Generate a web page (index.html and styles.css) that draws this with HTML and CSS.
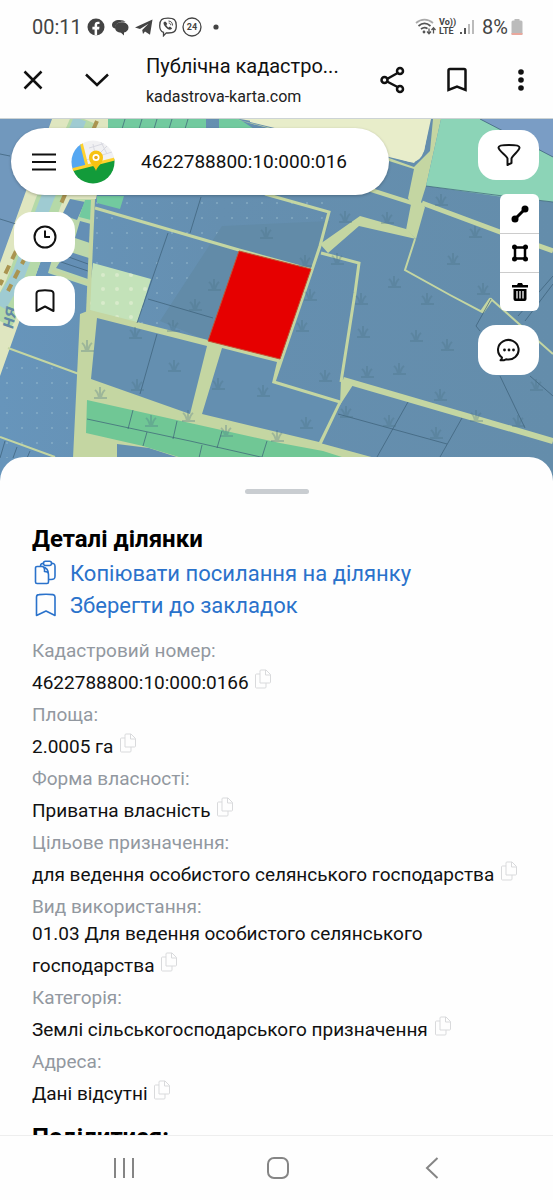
FILE: index.html
```html
<!DOCTYPE html>
<html lang="uk">
<head>
  <meta charset="UTF-8" />
  <meta name="viewport" content="width=device-width, initial-scale=1" />
  <title>Публічна кадастрова карта</title>
  <link rel="stylesheet" href="styles.css">
</head>
<body>

<div class="status-bar">
  <span class="clock">00:11</span>
  <svg class="status-icon" viewBox="0 0 20 20"><circle cx="10" cy="10" r="8.5" fill="#444"/><path d="M8.6 18.5v-6H6.4V9.8h2.2V8.2c0-2.4 1.3-3.5 3.3-3.5.7 0 1.3.1 1.6.1v2.3h-1.1c-1 0-1.3.5-1.3 1.3v1.4h2.4l-.4 2.7h-2v6z" fill="#fff"/></svg>
  <svg class="status-icon" viewBox="0 0 20 20"><path d="M2 8c0-3 3-5 7.500-5 3 0 5 .8 6 2-6-.8-10 1-10.500 6.500C3 11 2 10 2 8z" fill="#444"/><path d="M5 10.500c0-3.300 3-5.200 6.800-5.200s6.700 2 6.700 5.200c0 2.800-2 4.500-4.500 5V18.500l-3-2.800c-3.500-.2-6-2.200-6-5.200z" fill="#444"/></svg>
  <svg class="status-icon" viewBox="0 0 20 20"><path d="M1 10.500 18.500 2.600 16 17.700l-5-3.200-2 2.500-.8-4 6.300-6.200-8.500 5.200z" fill="#444"/></svg>
  <svg class="status-icon" viewBox="0 0 20 20" fill="none" stroke="#444" stroke-width="1.300"><path d="M10 1.200c6.200 0 8.300 1.800 8.300 7.500S16.200 16 10 16c-.6 0-1.200 0-1.700-.1L5.500 18.800v-3.500C2.700 14.300 1.700 12.500 1.700 8.700c0-5.700 2.100-7.500 8.300-7.500z"/><path d="M6.200 4.800c-1.500 1.200-.5 3.300 1.300 5.300s4.300 3.500 5.800 2.200l.8-1-2.200-1.700-1.200.9c-1-.5-2-1.500-2.400-2.600l1-.9-1.500-2.300z" fill="#444" stroke="none"/><path d="M10.500 4c2.600.2 4 1.700 4 4.500M10.700 6c1.200.1 2 .9 2 2.200" stroke-width="1"/></svg>
  <svg class="status-icon" viewBox="0 0 20 20"><circle cx="10" cy="10" r="9" fill="none" stroke="#444" stroke-width="1.300"/><text x="10" y="13.300" text-anchor="middle" class="badge-24">24</text></svg>
  <svg class="status-icon" viewBox="0 0 20 20"><circle cx="10" cy="10" r="2.600" fill="#444"/></svg>

  <div class="status-right">
    <svg width="21" height="18" viewBox="0 0 21 18" fill="none" stroke="#555" stroke-width="1.700"><path d="M1 5C6 .6 13 .6 18 5" stroke="#aaa"/><path d="M3.500 8c4-3.400 8-3.400 12 0M6 11c2.500-2 4.500-2 6.500-.3"/><circle cx="9" cy="14" r="1.400" fill="#555" stroke="none"/><path d="M14 10.500v5m-2-2 2 2.200 2-2.200M18.500 15.500v-5.500m-2 2 2-2.200 2 2.200" stroke-width="1.300"/></svg>
    <span class="volte"><span>Vo))</span><span>LTE</span></span>
    <svg width="16" height="18" viewBox="0 0 16 18"><path d="M1 14h2v2H1zM5 10h2v6H5z" fill="#555"/><path d="M9 6h2v10H9zM13 2h2v14h-2z" fill="#bbb"/></svg>
    <span class="charge">8%</span>
    <svg width="12" height="16" viewBox="0 0 12 16"><path d="M3.500 0h5v1.500H10a1.500 1.500 0 0 1 1.500 1.500v12a1 1 0 0 1-1 1h-9a1 1 0 0 1-1-1V3A1.500 1.500 0 0 1 2 1.500h1.500z" fill="#bbb"/><path d="M.5 14h11v1a1 1 0 0 1-1 1h-9a1 1 0 0 1-1-1z" fill="#eaa79c"/></svg>
  </div>
</div>

<header class="browser-bar">
  <button aria-label="Закрити"><svg width="24" height="24" viewBox="0 0 24 24"><path d="m3.500 3.500 17 17m0-17-17 17"/></svg></button>
  <button aria-label="Згорнути"><svg width="28" height="24" viewBox="0 0 28 24"><path d="m3 6.500 11 10.500L25 6.500"/></svg></button>
  <div class="page-info">
    <div class="page-title">Публічна кадастро...</div>
    <div class="page-url">kadastrova-karta.com</div>
  </div>
  <button aria-label="Поділитися"><svg width="26" height="28" viewBox="0 0 26 28"><path d="m7 13 11.500-6.500M7 15.500 18.500 21.500"/><circle cx="4.500" cy="14" r="3"/><circle cx="20" cy="5" r="3"/><circle cx="20" cy="23" r="3"/></svg></button>
  <button aria-label="Закладка"><svg width="20" height="26" viewBox="0 0 20 26"><path d="M1.500 3.500a1.500 1.500 0 0 1 1.500-1.500h14a1.500 1.500 0 0 1 1.500 1.500V23L10 19.500 1.500 23z"/></svg></button>
  <button aria-label="Меню"><svg width="8" height="24" viewBox="0 0 8 24"><g fill="#111" stroke="none"><circle cx="4" cy="4" r="2.800"/><circle cx="4" cy="12" r="2.800"/><circle cx="4" cy="20" r="2.800"/></g></svg></button>
</header>

<main class="map">
  <svg class="map-canvas" viewBox="0 118 553 364" preserveAspectRatio="xMidYMin slice">
    <defs>
      <pattern id="dots" width="15" height="15" patternUnits="userSpaceOnUse"><circle cx="7" cy="7" r="1" fill="#a9cad6" opacity=".45"/></pattern>
      <pattern id="light-dots" width="14" height="14" patternUnits="userSpaceOnUse"><circle cx="5" cy="8" r="2" fill="#e2f0d4" opacity=".7"/></pattern>
      <g id="plant" fill="none" stroke="#4a7286" stroke-width="2" opacity=".32"><path d="M0-6V5M-1 5Q-2-1-5-3M1 5Q2-1 5-3M-6 5H7"/></g>
      <linearGradient id="land"><stop offset="0" stop-color="#6795bb"/><stop offset=".4" stop-color="#658fb0"/><stop offset="1" stop-color="#648dab"/></linearGradient>
    </defs>
    <rect y="118" width="553" height="370" fill="url(#land)"/>
    <path d="M95 195h230l-5 50-60 5-100 80-70-20zM0 350l80 25-5 82H0z" fill="url(#dots)"/>
    <path d="M222 225 330 220 312 268 239 250 208 340 160 320z" fill="#628ba8"/>

    <!-- river and the shore -->
    <path d="M0 118h52L0 262z" fill="#7198bd"/>
    <path d="M52 118h60l-16 80-24 2-32 62L0 375V262z" fill="#dfe6c0"/>
    <path d="M84 118 48 202 18 285 0 320" stroke="#b5d9a8" stroke-width="26" fill="none"/>
    <path d="M80 118 45 203 18 275 0 305" stroke="#9fcbd2" stroke-width="13" fill="none"/>
    <path d="M97 120 60 205 M26 255 8 290 M16 250 0 284" stroke="#aa9450" stroke-width="4" stroke-dasharray="9 7" fill="none"/>
    <text class="river-name" transform="translate(13 328) rotate(-80)">ня</text>
    <path d="M0 153l10 2M0 218l16 5" class="border"/>

    <!-- top strip -->
    <path d="M108 118h98v12h-98zM219 118h20l18 12h-38z" fill="#72ca9f"/>
    <path d="M125 118l-3 10M142 118l-3 10M157 118l-3 10M172 118l-3 10M188 118l-3 10" class="border"/>
    <path d="M240 118h191l-7 32-10 12-25-6-90-28z" fill="#e8edca"/>
    <path d="M235 118 389 157 414 166 430 150 433 118h8l-15 67-5 16 4 5-9 32-10-9 5-26-3-6 6-29-25-8-140-38z" fill="#c4d6a2"/>
    <path d="M250 118h180l-6 32q-4 12-14 11l-28-8-132-32z" fill="#e8edca"/>
    <path d="M441 118h39l73 38v45l-50-5-77-11z" fill="#8cd4b7"/>
    <path d="M480 118h73v38z" fill="#7a9dc5"/>
    <path d="M480 118l73 38M426 185l77 10 50 6" class="border"/>

    <!-- small parcels left -->
    <path d="M70 198h23l-3 88-42-14z" fill="#bdd8ab"/>
    <path d="M70 198 85 201 77 219 62 214zM80 220l11 3-1 19-15-5zM67 250l22 7-1 21-32-11z" fill="#648fb5"/>
    <path d="M97 195h27l-4 13-23-6zM85 199h8l-2 20-12-3z" fill="#72ca9f"/>
    <path d="M66 255l22 8M61 261l27 9" class="border"/>
    <path d="M93 262 151 278 137 322 87 309z" fill="#c3e2b9"/>
    <path d="M93 262 151 278 137 322 87 309z" fill="url(#light-dots)"/>

    <!-- roads -->
    <path d="M80 313 90 309 208 339 281 357 275 382 340 402 320 442 375 457 73 457z" fill="#c4d6a2"/>
    <g class="road">
      <path d="M93 198 88 312" stroke-width="4"/>
      <path d="M95 207 239 249 312 269" stroke-width="3"/>
      <path d="M265 193 329 211 320 245 312 269 274 381 340 401 320 443" stroke-width="3"/>
      <path d="M321 252 359 262 355 292 341 381" stroke-width="3"/>
      <path d="M343 379 553 440" stroke-width="6"/>
      <path d="M368 188 412 202" stroke-width="4"/>
      <path d="M422 202 500 231 553 250" stroke-width="5"/>
      <path d="M415 238 405 269 450 294 482 311 491 298 553 353" stroke-width="2"/>
      <path d="M482 311 491 298" stroke-width="4"/>
      <path d="M8 347 79 373M0 436 55 456" stroke-width="2"/>
      <path d="M52 270 88 282" stroke-width="3"/>
    </g>
    <path d="M320 243 360 215 406 228 416 238 359 225 328 252zM341 378l12 6-13 20z" fill="#c4d6a2"/>

    <path d="M97 317 207 345 190 413 91 378zM222 347 277 361 272 382 338 402 319 441 202 413zM117 443l32 4 34 11h-66z" fill="#648fb0"/>
    <path d="M87 399 280 442 323 450 345 457H182l-39-12-57-13z" fill="#70c795"/>
    <path d="M157 333 140 393M87 418 190 440 265 457M133 409 128 428M177 420 173 438M222 430 217 447M267 440 262 456M147 431 143 445M202 444 199 457" class="border"/>
    <path d="M201 196 190 232M168 232 137 322M148 298 213 317M500 375 525 427M338 413 447 443M408 401 377 456M462 417 440 456M491 298 476 325 480 330M553 275 518 315M553 283 525 320M530 375 553 395M5 440 0 457M17 446 13 457M30 450 27 457" class="border"/>

    <path d="M239 250 311 268 280 358 208 340z" fill="#e60000" stroke="#c44f31"/>

    <use href="#plant" x="87" y="345"/><use href="#plant" x="100" y="392"/><use href="#plant" x="135" y="332"/>
    <use href="#plant" x="174" y="365"/><use href="#plant" x="137" y="384"/><use href="#plant" x="195" y="304"/>
    <use href="#plant" x="173" y="325"/><use href="#plant" x="218" y="383"/><use href="#plant" x="263" y="390"/>
    <use href="#plant" x="188" y="415"/><use href="#plant" x="151" y="420"/><use href="#plant" x="226" y="430"/>
    <use href="#plant" x="214" y="284"/><use href="#plant" x="266" y="232"/><use href="#plant" x="305" y="260"/>
    <use href="#plant" x="345" y="216"/><use href="#plant" x="387" y="217"/><use href="#plant" x="441" y="199"/>
    <use href="#plant" x="475" y="231"/><use href="#plant" x="453" y="258"/><use href="#plant" x="394" y="281"/>
    <use href="#plant" x="337" y="258"/><use href="#plant" x="310" y="294"/><use href="#plant" x="361" y="298"/>
    <use href="#plant" x="427" y="298"/><use href="#plant" x="302" y="325"/><use href="#plant" x="363" y="331"/>
    <use href="#plant" x="416" y="335"/><use href="#plant" x="447" y="344"/><use href="#plant" x="367" y="371"/>
    <use href="#plant" x="399" y="368"/><use href="#plant" x="325" y="375"/><use href="#plant" x="440" y="394"/>
    <use href="#plant" x="306" y="422"/><use href="#plant" x="346" y="411"/><use href="#plant" x="389" y="420"/>
    <use href="#plant" x="436" y="432"/><use href="#plant" x="476" y="415"/><use href="#plant" x="518" y="420"/>
    <use href="#plant" x="536" y="384"/><use href="#plant" x="483" y="288"/><use href="#plant" x="277" y="435"/>
  </svg>

  <div class="map-controls">
    <div class="left-controls">
      <form class="search">
        <button type="button" class="menu-btn" aria-label="Меню"><svg width="26" height="20" viewBox="0 0 26 20"><path d="M1 2.500h24M1 10h24M1 17.500h24"/></svg></button>
        <svg class="logo" width="44" height="44" viewBox="0 0 44 44">
          <clipPath id="disc"><circle cx="22" cy="22" r="21.500"/></clipPath>
          <g clip-path="url(#disc)">
            <path d="M0 0h44v44H0z" fill="#f1f1f3"/>
            <path d="M18 8 38 2M24 18l12-12M15 20l26-8M30 2l6 12M22 4l3 14" stroke="#d7d8e0" stroke-width="1" fill="none"/>
            <path d="M0 0h9l6 26-15 5z" fill="#55a7f2"/>
            <path d="M10 2l6 24" stroke="#ffd22e" stroke-width="3"/>
            <path d="M0 30 20 25 44 19v25H0z" fill="#129b3a"/>
            <path d="M0 30 20 25 44 19" stroke="#ffd22e" stroke-width="3" fill="none"/>
            <path d="M25 31c-1-5-7-7-7-13.500a7 7 0 0 1 14 0C32 24 26 26 25 31z" fill="#f8c312"/>
            <circle cx="25" cy="17.500" r="3.500" fill="#fff"/><circle cx="25" cy="17.500" r="1.800" fill="#e9a91a"/>
          </g>
        </svg>
        <input type="text" aria-label="Кадастровий номер" value="4622788800:10:000:016">
      </form>
      <button class="map-btn" aria-label="Історія"><svg width="24" height="24" viewBox="0 0 24 24"><circle cx="12" cy="12" r="10.500"/><path d="M12 5.500V12h5"/></svg></button>
      <button class="map-btn" aria-label="Закладки"><svg width="20" height="24" viewBox="0 0 20 24"><path d="M1.500 4.500A3 3 0 0 1 4 1.800c4-.6 8-.6 12 0a3 3 0 0 1 2.500 2.700V22L10 17.500 1.500 22z"/></svg></button>
    </div>
    <div class="right-controls">
      <button class="map-btn" aria-label="Фільтр"><svg width="24" height="24" viewBox="0 0 24 24"><path d="M1.500 4.500C1.500 1.200 22.500 1.200 22.500 4.500c0 3.500-7 7.500-8 11V20l-4 2v-6.500c-1-3.500-9-7.500-9-11z"/></svg></button>
      <div class="draw-tools">
        <button aria-label="Виміряти відстань"><svg width="18" height="18" viewBox="0 0 18 18"><path d="M4 14 14 4" stroke="#000" stroke-width="3"/><circle cx="4" cy="14" r="3.500"/><circle cx="14" cy="4" r="3.500"/></svg></button>
        <button aria-label="Виміряти площу"><svg width="18" height="18" viewBox="0 0 18 18"><path d="M4 3.500h10v11H4z" fill="none" stroke="#000" stroke-width="2.500"/><circle cx="3.500" cy="3" r="2.500"/><circle cx="14.500" cy="3" r="2.500"/><circle cx="3.500" cy="15" r="2.500"/><circle cx="14.500" cy="15" r="2.500"/></svg></button>
        <button aria-label="Видалити"><svg width="18" height="20" viewBox="0 0 18 20"><path d="M1 3h5l1-2h4l1 2h5v2.500H1zM2.500 7h13v10a2 2 0 0 1-2 2h-9a2 2 0 0 1-2-2z"/><path d="M6 9v7.500M9 9v7.500M12 9v7.500" stroke="#fff" stroke-width="1.300"/></svg></button>
      </div>
      <button class="map-btn" aria-label="Чат"><svg width="24" height="24" viewBox="0 0 24 24"><path d="M5 19.500A10.300 9.800 0 1 1 9 21.300c-1.500.8-3.500 1.200-5.500 1C4.800 21.300 5 20.500 5 19.500z"/><g fill="#111" stroke="none"><circle cx="7.500" cy="12" r="1.400"/><circle cx="12" cy="12" r="1.400"/><circle cx="16.500" cy="12" r="1.400"/></g></svg></button>
    </div>
  </div>
</main>

<!-- copy icon, shared by all rows -->
<svg class="sprite">
  <symbol id="copy" viewBox="0 0 16 20"><path d="M5 3.500V14h9.500a1 1 0 0 0 1-1V5.500L11 1H6a1 1 0 0 0-1 1zM10.500 1v5h5M5 5H1.500a1 1 0 0 0-1 1v12a1 1 0 0 0 1 1H10a1 1 0 0 0 1-1v-4"/></symbol>
</svg>

<section class="sheet">
  <div class="handle"></div>
  <h2>Деталі ділянки</h2>
  <a href="#" class="action">
    <svg width="24" height="26" viewBox="0 0 24 26"><path d="M3 6.500h5.500q6 1.500 6 8V22a1.500 1.500 0 0 1-1.500 1.500H3A1.500 1.500 0 0 1 1.500 22V8A1.500 1.500 0 0 1 3 6.500zM8.500 6.500q2.500 1 2 5 4 0 4 3M6.500 6.500C6.500 4 7.500 3.300 10 3.300M17.500 3.300c3 0 3.500.7 3.500 3.200v9.500c0 3-1 3.500-4 3.500h-2.500"/><rect x="9.500" y="1.200" width="8" height="4.300" rx="2"/></svg>
    Копіювати посилання на ділянку
  </a>
  <a href="#" class="action">
    <svg width="24" height="24" viewBox="0 0 24 24"><path d="M2.500 4A2.500 2.500 0 0 1 5 1.600q7-.8 14 0A2.500 2.500 0 0 1 21 4v18.500L12 18l-9.500 4.500z"/></svg>
    Зберегти до закладок
  </a>

  <dl class="details">
    <dt>Кадастровий номер:</dt>
    <dd>4622788800:10:000:0166 <button aria-label="Копіювати"><svg><use href="#copy"/></svg></button></dd>
    <dt>Площа:</dt>
    <dd>2.0005 га <button aria-label="Копіювати"><svg><use href="#copy"/></svg></button></dd>
    <dt>Форма власності:</dt>
    <dd>Приватна власність <button aria-label="Копіювати"><svg><use href="#copy"/></svg></button></dd>
    <dt>Цільове призначення:</dt>
    <dd>для ведення особистого селянського господарства <button aria-label="Копіювати"><svg><use href="#copy"/></svg></button></dd>
    <dt>Вид використання:</dt>
    <dd>01.03 Для ведення особистого селянського господарства <button aria-label="Копіювати"><svg><use href="#copy"/></svg></button></dd>
    <dt>Категорія:</dt>
    <dd>Землі сільськогосподарського призначення <button aria-label="Копіювати"><svg><use href="#copy"/></svg></button></dd>
    <dt>Адреса:</dt>
    <dd>Дані відсутні <button aria-label="Копіювати"><svg><use href="#copy"/></svg></button></dd>
  </dl>

  <h2>Поділитися:</h2>
</section>

<nav class="system-nav">
  <button aria-label="Останні"><svg width="22" height="22" viewBox="0 0 22 22"><path d="M2 1v20M11 1v20M20 1v20"/></svg></button>
  <button aria-label="Додому"><svg width="22" height="22" viewBox="0 0 22 22"><rect x="1" y="1" width="20" height="20" rx="6"/></svg></button>
  <button aria-label="Назад"><svg width="14" height="22" viewBox="0 0 14 22"><path d="M12.500 1 2 11l10.500 10"/></svg></button>
</nav>

</body>
</html>
```

FILE: styles.css
```css
* {
  box-sizing: border-box;
}
body {
  margin: 0;
  height: 100vh;
  display: flex;
  flex-direction: column;
  overflow: hidden;
  background: #fefefe;
  color: #111;
  font-family: Roboto, "Noto Sans", sans-serif;
}
button {
  border: 0;
  padding: 0;
  background: none;
  cursor: pointer;
}

/* Status bar */
.status-bar {
  flex: none;
  display: flex;
  align-items: center;
  gap: 4px;
  height: 54px;
  padding: 0 30px 0 32px;
  color: #444;
}
.clock {
  width: 50px;
  font-size: 20px;
}
.status-icon {
  width: 20px;
  height: 20px;
}
.badge-24 {
  font-size: 9px;
  font-weight: 700;
  fill: #444;
}
.status-right {
  display: flex;
  align-items: center;
  gap: 3px;
  margin-left: auto;
}
.volte {
  display: flex;
  flex-direction: column;
  font-size: 9px;
  font-weight: 700;
  line-height: 9px;
}
.charge {
  margin-left: 4px;
  font-size: 20px;
}

/* Browser toolbar */
.browser-bar {
  flex: none;
  display: flex;
  align-items: center;
  height: 64px;
  padding: 0 0 12px 1px;
}
.browser-bar button {
  flex: none;
  display: flex;
  justify-content: center;
  width: 64px;
}
.browser-bar svg {
  fill: none;
  stroke: #111;
  stroke-width: 2.5;
}
.page-info {
  flex: 1;
  min-width: 0;
  margin-left: 17px;
  padding-top: 2px;
  white-space: nowrap;
}
.page-title {
  font-size: 20px;
  line-height: 32px;
}
.page-url {
  font-size: 16px;
  line-height: 30px;
  color: #222;
}

/* Map */
.map {
  flex: none;
  position: relative;
  height: 364px;
  border-top: 1px solid #ccd3d4;
}
.map-canvas {
  position: absolute;
  width: 100%;
  height: 100%;
}
.border {
  fill: none;
  stroke: #3c5f78;
  stroke-width: 1;
  opacity: .7;
}
.road {
  fill: none;
  stroke: #c4d6a2;
}
.river-name {
  font-size: 20px;
  font-weight: 500;
  font-style: italic;
  fill: #6189a5;
}
.map-controls {
  position: relative;
  display: flex;
  padding: 9px 14px 0 11px;
}
.left-controls {
  flex: 1;
  min-width: 0;
  margin-right: 89px;
}
.search {
  display: flex;
  align-items: center;
  height: 67px;
  margin-bottom: 17px;
  padding: 0 20px;
  border-radius: 34px;
  background: #fff;
  box-shadow: 0 1px 3px rgba(0, 0, 0, .25);
}
.search input {
  flex: 1;
  min-width: 0;
  margin-left: 26px;
  padding: 0;
  border: 0;
  outline: 0;
  background: none;
  color: #111;
  font: 19px Roboto, sans-serif;
}
.menu-btn {
  height: 20px;
}
.logo {
  flex: none;
  margin-left: 14px;
}
.menu-btn svg,
.map-btn svg {
  display: block;
  fill: none;
  stroke: #111;
  stroke-width: 2;
  stroke-linejoin: round;
}
.map-btn {
  display: flex;
  align-items: center;
  justify-content: center;
  width: 61px;
  height: 50px;
  border-radius: 18px;
  background: #fff;
}
.left-controls .map-btn {
  margin: 0 0 14px 3px;
}
.right-controls {
  flex: none;
  display: flex;
  flex-direction: column;
  align-items: flex-end;
  gap: 14px;
  padding-top: 2px;
}
.draw-tools {
  overflow: hidden;
  border-radius: 6px;
  background: #fff;
}
.draw-tools button {
  display: flex;
  align-items: center;
  justify-content: center;
  width: 39px;
  height: 39px;
}
.draw-tools button + button {
  border-top: 1px solid #ccc;
}

/* Bottom sheet */
.sprite {
  display: none;
}
.sheet {
  flex: 1;
  min-height: 0;
  overflow: hidden;
  position: relative;
  margin-top: -25px;
  padding: 32px 32px 0;
  border-radius: 24px 24px 0 0;
  background: #fefefe;
}
.handle {
  width: 64px;
  height: 5px;
  margin: 0 auto 27px;
  border-radius: 3px;
  background: #c9cdd1;
}
h2 {
  margin: 0;
  font-size: 24px;
  font-weight: 700;
  line-height: 36px;
  color: #000;
}
.action {
  display: flex;
  align-items: center;
  gap: 12px;
  height: 32px;
  padding-left: 2px;
  color: #2a72cb;
  font-size: 22px;
  text-decoration: none;
}
.action svg {
  fill: none;
  stroke: #2a72cb;
  stroke-width: 1.6;
  stroke-linejoin: round;
}
.details {
  margin: 16px 0 12px;
  font-size: 19px;
  line-height: 27px;
}
.details dt {
  color: #9298a0;
}
.details dd {
  margin: 0 0 5px;
}
.details button {
  display: inline-block;
  height: 25px;
  padding-top: 5px;
  margin-left: 2px;
  overflow: hidden;
}
.details button svg {
  display: block;
  width: 16px;
  height: 20px;
  fill: none;
  stroke: #d9dadc;
  stroke-width: 1;
}

/* System navigation */
.system-nav {
  flex: none;
  display: flex;
  justify-content: center;
  height: 65px;
  padding-left: 3px;
  border-top: 1px solid #eee;
}
.system-nav button {
  display: flex;
  align-items: center;
  justify-content: center;
  width: 28%;
}
.system-nav svg {
  fill: none;
  stroke: #858585;
  stroke-width: 2;
}
```
